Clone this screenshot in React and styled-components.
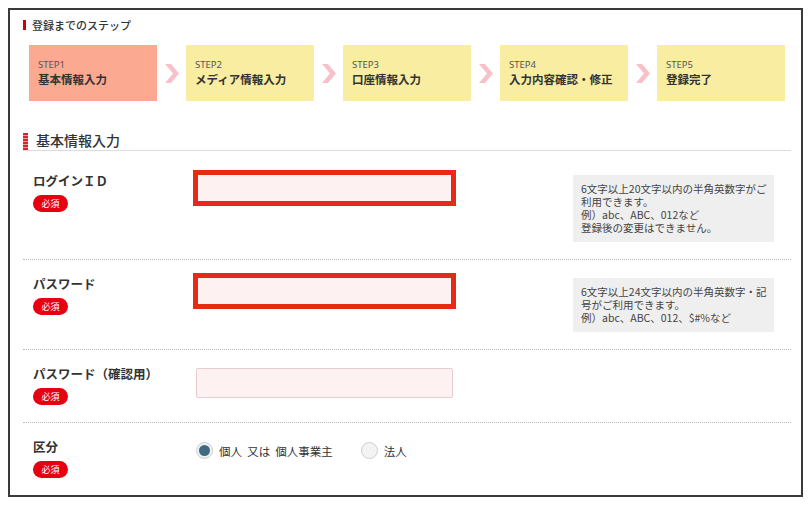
import React from "react";
import styled, { createGlobalStyle } from "styled-components";

const GlobalStyle = createGlobalStyle`
  body {
    margin: 8px;
    background: #fff;
    font-family: "Noto Sans CJK JP", "Noto Sans", sans-serif;
    color: #333;
  }
`;

// Styled Components
const Frame = styled.div`
  width: 795px;
  height: 489px;
  box-sizing: border-box;
  border: 2px solid #3a3a3a;
  overflow: hidden;
  padding: 7px 10px 0 13px;
  background: #fff;
`;

const StepHeading = styled.div`
  display: flex;
  align-items: center;
  gap: 6px;
  height: 16px;
  font-size: 11px;
  font-weight: 500;
  color: #333;
`;

const StepHeadingBar = styled.span`
  width: 3px;
  height: 10px;
  background: #d40000;
`;

const StepList = styled.div`
  margin-top: 12px;
  padding: 0 6px;
  display: flex;
  align-items: center;
  justify-content: space-between;
`;

const StepBox = styled.div`
  width: 128px;
  height: 56px;
  box-sizing: border-box;
  padding: 14px 0 0 9px;
  background: ${(p) => (p.$active ? "#fca991" : "#f9eda2")};
  display: flex;
  flex-direction: column;
`;

const StepNo = styled.span`
  font-family: "Noto Sans", "Noto Sans CJK JP", sans-serif;
  font-size: 9.5px;
  line-height: 11px;
  color: #555;
  margin-bottom: 2px;
`;

const StepName = styled.span`
  font-size: 11.5px;
  line-height: 14px;
  font-weight: bold;
  color: #333;
`;

const SectionTitle = styled.h2`
  margin: 28px 0 0;
  height: 21px;
  display: flex;
  align-items: center;
  gap: 8px;
  border-bottom: 1px solid #dcdcdc;
  font-size: 14px;
  font-weight: 500;
  color: #333;
`;

const SectionBar = styled.span`
  align-self: flex-end;
  width: 5px;
  height: 17px;
  background: repeating-linear-gradient(
      to bottom,
      #d8232a 0 2px,
      #f19a9a 2px 3px
    );
`;

const Form = styled.div`
  margin-top: 6px;
`;

const Row = styled.div`
  display: grid;
  grid-template-columns: 163px 377px 201px;
  align-items: start;
  padding: 16px 0 17px 10px;
  border-bottom: 1px dotted #b8b8b8;
`;

const LabelCol = styled.div`
  display: flex;
  flex-direction: column;
  align-items: flex-start;
`;

const Label = styled.div`
  font-size: 12.5px;
  line-height: 16px;
  font-weight: bold;
  color: #333;
  margin-bottom: 6px;
`;

const Required = styled.span`
  width: 35px;
  height: 17px;
  border-radius: 9px;
  background: #e60012;
  color: #fff;
  font-size: 9px;
  display: flex;
  align-items: center;
  justify-content: center;
`;

const Input = styled.div`
  width: 257px;
  height: 30px;
  box-sizing: border-box;
  background: #fdf1f1;
  border: ${(p) => (p.$error ? "2px solid #e62a17" : "1px solid #e6cccc")};
  border-radius: ${(p) => (p.$error ? "0" : "2px")};
  box-shadow: ${(p) => (p.$error ? "0 0 0 3px #e62a17" : "none")};
  margin-top: ${(p) => (p.$error ? "0" : "2px")};
`;

const Help = styled.div`
  margin-top: 2px;
  background: #efefef;
  padding: 7px 8px 8px;
  font-size: 10.5px;
  line-height: 13px;
  color: #444;
  white-space: nowrap;
`;

const RadioGroup = styled.div`
  margin-top: 3px;
  display: flex;
  align-items: center;
`;

const RadioOption = styled.label`
  display: flex;
  align-items: center;
  gap: 6px;
  margin-right: 28px;
  font-size: 11.5px;
  color: #333;
`;

const RadioCircle = styled.span`
  width: 17px;
  height: 17px;
  box-sizing: border-box;
  border-radius: 50%;
  border: 1px solid #cfcfcf;
  background: ${(p) => (p.$checked ? "#eef1f4" : "#f3f3f3")};
  display: flex;
  align-items: center;
  justify-content: center;

  &::after {
    content: "";
    display: ${(p) => (p.$checked ? "block" : "none")};
    width: 11px;
    height: 11px;
    border-radius: 50%;
    background: #3f6a80;
  }
`;

function Chevron() {
  return (
    <svg width="14" height="19" viewBox="0 0 14 19">
      <polygon points="0,0 6,0 14,9.5 6,19 0,19 8,9.5" fill="#f8c1c9" />
    </svg>
  );
}

const steps = [
  { no: "STEP1", name: "基本情報入力", active: true },
  { no: "STEP2", name: "メディア情報入力" },
  { no: "STEP3", name: "口座情報入力" },
  { no: "STEP4", name: "入力内容確認・修正" },
  { no: "STEP5", name: "登録完了" },
];

function App() {
  return (
    <>
      <GlobalStyle />
      <Frame>
        <StepHeading>
          <StepHeadingBar />
          登録までのステップ
        </StepHeading>
        <StepList>
          {steps.map((s, i) => (
            <React.Fragment key={s.no}>
              {i > 0 && <Chevron />}
              <StepBox $active={s.active}>
                <StepNo>{s.no}</StepNo>
                <StepName>{s.name}</StepName>
              </StepBox>
            </React.Fragment>
          ))}
        </StepList>

        <SectionTitle>
          <SectionBar />
          基本情報入力
        </SectionTitle>

        <Form>
          <Row>
            <LabelCol>
              <Label>ログインＩＤ</Label>
              <Required>必須</Required>
            </LabelCol>
            <Input $error />
            <Help>
              6文字以上20文字以内の半角英数字がご
              <br />
              利用できます。
              <br />
              例）abc、ABC、012など
              <br />
              登録後の変更はできません。
            </Help>
          </Row>
          <Row>
            <LabelCol>
              <Label>パスワード</Label>
              <Required>必須</Required>
            </LabelCol>
            <Input $error />
            <Help>
              6文字以上24文字以内の半角英数字・記
              <br />
              号がご利用できます。
              <br />
              例）abc、ABC、012、$#%など
            </Help>
          </Row>
          <Row>
            <LabelCol>
              <Label>パスワード（確認用）</Label>
              <Required>必須</Required>
            </LabelCol>
            <Input />
          </Row>
          <Row>
            <LabelCol>
              <Label>区分</Label>
              <Required>必須</Required>
            </LabelCol>
            <RadioGroup>
              <RadioOption>
                <RadioCircle $checked />
                個人&nbsp;&nbsp;又は&nbsp;&nbsp;個人事業主
              </RadioOption>
              <RadioOption>
                <RadioCircle />
                法人
              </RadioOption>
            </RadioGroup>
          </Row>
        </Form>
      </Frame>
    </>
  );
}

export default App;
